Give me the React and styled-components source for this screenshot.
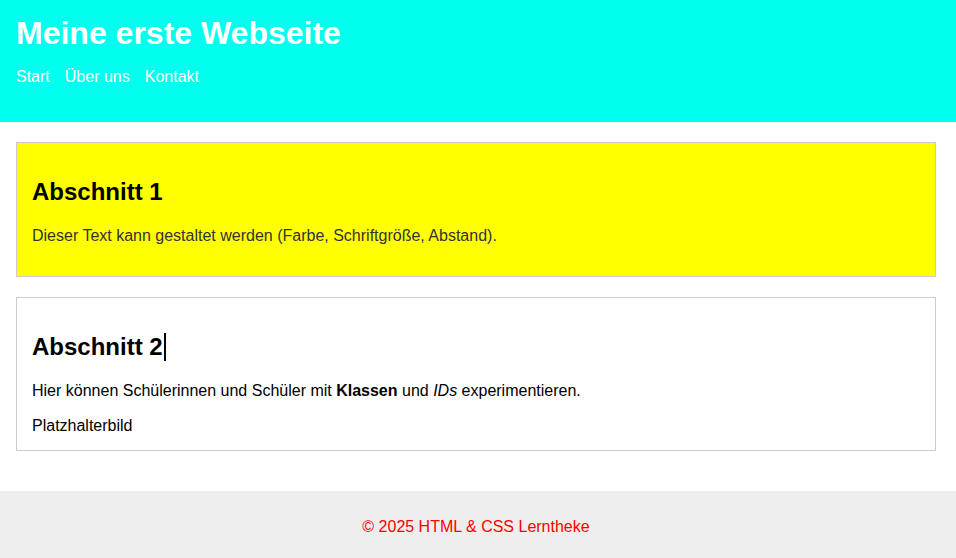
import React from "react";
import styled, { createGlobalStyle } from "styled-components";

const GlobalStyle = createGlobalStyle`
  body {
    margin: 0;
    font-family: "Liberation Sans", Arial, sans-serif;
    background: #fff;
    color: #000;
  }
`;

const Header = styled.header`
  background: #00ffee;
  padding: 15px 16px 20px;
`;

const Title = styled.h1`
  margin: 0;
  font-size: 32px;
  color: #fff;
`;

const Nav = styled.nav`
  display: flex;
  gap: 15px;
  margin-top: 16px;
  margin-bottom: 16px;
`;

const NavLink = styled.a`
  color: #fff;
  text-decoration: none;
  font-size: 16px;
`;

const Main = styled.main`
  padding: 20px 16px 40px;
  max-width: 920px;
  display: flex;
  flex-direction: column;
  gap: 20px;
`;

const Section = styled.section`
  box-sizing: border-box;
  background: ${props => props.bg || "#fff"};
  border: 1px solid #ccc;
  padding: 15px;
`;

const Heading = styled.h2`
  font-size: 24px;
  margin: 20px 0 21px;
`;

const Text = styled.p`
  margin: 16px 0;
  font-size: 16px;
  color: ${props => props.color || "#000"};
`;

const Caret = styled.span`
  display: inline-block;
  width: 2px;
  height: 28px;
  background: #000;
  vertical-align: -6px;
  margin-left: 1px;
`;

const Placeholder = styled.span`
  display: block;
  font-size: 16px;
  line-height: 19px;
`;

const Footer = styled.footer`
  background: #eee;
  padding: 11px 20px 10px 16px;
  text-align: center;
`;

const FooterText = styled.p`
  margin: 16px 0;
  color: #ff0000;
  font-size: 16px;
`;

const links = ["Start", "Über uns", "Kontakt"];

export default function App() {
  return (
    <>
      <GlobalStyle />
      <Header>
        <Title>Meine erste Webseite</Title>
        <Nav>
          {links.map(link => (
            <NavLink href="#" key={link}>{link}</NavLink>
          ))}
        </Nav>
      </Header>
      <Main>
        <Section bg="#ffff00">
          <Heading>Abschnitt 1</Heading>
          <Text color="#333">Dieser Text kann gestaltet werden (Farbe, Schriftgröße, Abstand).</Text>
        </Section>
        <Section>
          <Heading>Abschnitt 2<Caret /></Heading>
          <Text>
            Hier können Schülerinnen und Schüler mit <strong>Klassen</strong> und <em>IDs</em> experimentieren.
          </Text>
          <Placeholder>Platzhalterbild</Placeholder>
        </Section>
      </Main>
      <Footer>
        <FooterText>© 2025 HTML &amp; CSS Lerntheke</FooterText>
      </Footer>
    </>
  );
}
